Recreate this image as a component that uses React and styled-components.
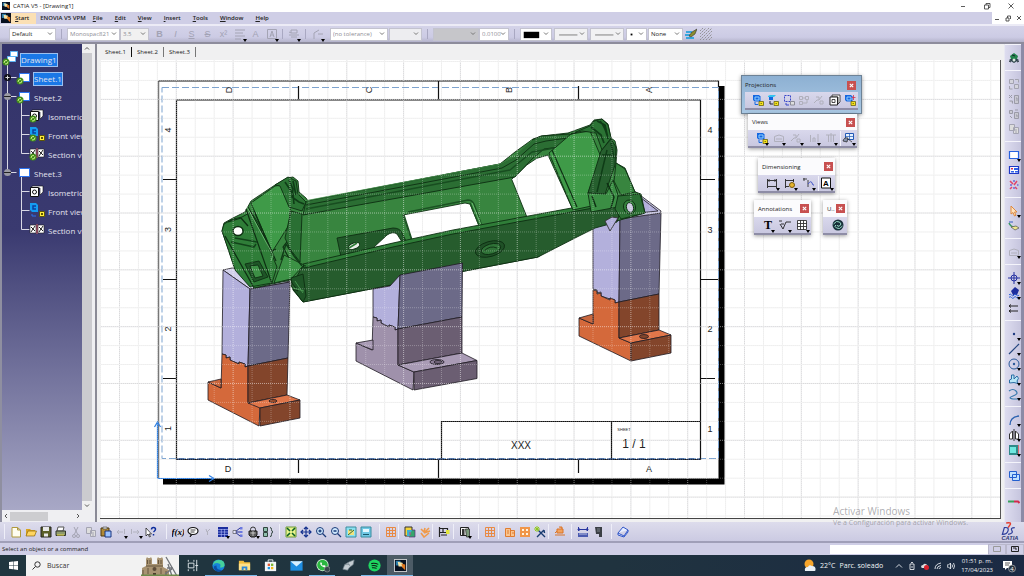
import React from "react";
import styled, { createGlobalStyle } from "styled-components";

const range = (n) => Array.from({ length: n }, (_, i) => i);

/* 12 x 12 glyphs used by every toolbar */
const cube = (
    <>
        <path d="M1 1h6l1.500 1.500v5H2.500L1 6z" fill="#1467e0" />
        <path d="M3 3h4v3H3z" fill="none" stroke="#8fd0ff" />
    </>
);
const yellowBox = <path d="M7 7.500h4.500v4H7zM8.500 9.500h1.500" fill="#f6e21c" stroke="#6b6410" strokeWidth=".8" />;
const sheetBack = <path d="M1.500 1.500h4v4h-4zM6.500 6.500h4v4h-4zM7 1.500h3.500v3M1.500 8v3h3" fill="#d4d4dc" stroke="#a3a3b0" />;

const glyphs = {
    catia: (
        <>
            <path d="M0 0h12v12H0z" fill="#07101f" />
            <path d="M1 1h5v5H1z" fill="#2a7ba8" />
            <path d="M3 2l5 1 2 5-3-1-3 0z" fill="#f3e3a8" />
            <path d="M7 4l4 1v6l-3-3z" fill="#e0781f" />
        </>
    ),
    fresh: <path d="M2 1.500h5.500L10.500 4v7H2zM7.500 1.500V4h3" fill="#fffdf0" stroke="#b09a3c" />,
    open: (
        <>
            <path d="M1 10V3h4l1 1h4v6z" fill="#d9a520" />
            <path d="M1 10l2-5h8.500l-2 5z" fill="#ffd560" stroke="#8a640c" strokeWidth=".7" />
        </>
    ),
    save: (
        <>
            <path d="M1 1h10v10H1z" fill="#5a5f28" stroke="#222" />
            <path d="M3 1h6v4H3zM4 7.500h4v3H4z" fill="#e8e8e8" />
        </>
    ),
    print: (
        <>
            <path d="M3 1h6l-1 4H2z" fill="#fff" stroke="#555" />
            <path d="M1 5h9.500v4.500H1z" fill="#8f9a6c" stroke="#30352a" />
            <path d="M2 9h7" stroke="#e3d649" />
        </>
    ),
    cut: <path d="M4 1l3.500 7M8 1L4.500 8M2.500 10a1.500 1.500 0 1 0 3 0 1.500 1.500 0 1 0-3 0M6.500 10a1.500 1.500 0 1 0 3 0 1.500 1.500 0 1 0-3 0" fill="none" stroke="#a4a4b2" />,
    copy: <path d="M1.500 1.500h5v6h-5zM5.500 4.500h5v6h-5zM7 7h2M7 9h2" fill="#ddd" stroke="#a4a4b2" />,
    paste: (
        <>
            <path d="M1 2h8v8H1z" fill="#b28a35" stroke="#4d3b12" />
            <path d="M3 1h4v2H3z" fill="#d9d9d9" stroke="#444" strokeWidth=".6" />
            <path d="M5 5h6v6H5z" fill="#9cc3ff" stroke="#18357f" />
        </>
    ),
    undo: <path d="M2 6h6M2 6l2-2M2 6l2 2M9.500 3v5" fill="none" stroke="#b1b1be" />,
    redo: <path d="M3 6h6M9 6L7 4M9 6L7 8M1.500 3v5" fill="none" stroke="#b1b1be" />,
    help: (
        <>
            <path d="M1 2v8l2-2 1.500 3 1-.5L4 8h2.500z" fill="#fff" stroke="#111" strokeWidth=".7" />
            <path d="M6.500 3.500q0-2 2-2t2 1.800q0 1.200-2 2.700M8.500 8v1.500" fill="none" stroke="#0c2c9c" strokeWidth="1.500" />
        </>
    ),
    fx: <text x="-.5" y="9" fontFamily="Liberation Serif, serif" fontStyle="italic" fontWeight="bold" fontSize="9">f(x)</text>,
    talk: (
        <>
            <ellipse cx="6" cy="5" rx="5" ry="3.500" fill="#fff" stroke="#111" strokeWidth="1.200" />
            <path d="M4 8l-1 3 3-3M3.500 4h5M3.500 6h4" fill="none" stroke="#111" strokeWidth=".8" />
        </>
    ),
    hook: <path d="M4 3l1 3 3-3M5.500 6v3" fill="none" stroke="#b1b1be" />,
    grid: (
        <>
            <path d="M1 1h10v10H1z" fill="#1b2d9e" />
            <path d="M1 3.500h10M1 6h10M1 8.500h10M4.300 3v8M7.600 3v8" stroke="#b9c3ff" strokeWidth=".6" />
        </>
    ),
    nodes: (
        <>
            <path d="M3 6l5-4M3 6h6M3 6l5 4" stroke="#26309c" fill="none" />
            <path d="M1 4.500h3v3H1z" fill="#e8e8ff" stroke="#444" strokeWidth=".6" />
            <path d="M8 1h2.500v2.500H8zM8 5h2.500v2H8zM8 8.500h2.500V11H8z" fill="#6a78e0" />
        </>
    ),
    lock: (
        <>
            <path d="M3.500 5V3.500a2.500 2.500 0 0 1 5 0V5" fill="none" stroke="#333" />
            <path d="M2 5h8v4l-2 2H4L2 9z" fill="#5a5a5a" stroke="#1c1c1c" />
            <path d="M6 5v5M3.500 7h5" stroke="#d8d8d8" strokeWidth=".8" />
        </>
    ),
    book: (
        <>
            <path d="M1.500 1.500h4v4h-4zM1.500 6.500h4v4h-4z" fill="#8fc0ae" stroke="#31453e" />
            <path d="M8 1.500q1.500 0 1.500 2t1.500 2.500q-1.500 0-1.500 2.500t-1.500 2" fill="none" stroke="#31453e" />
        </>
    ),
    fit: (
        <>
            <path d="M1 1h10v10H1z" fill="#e6f28a" stroke="#6c9a3a" />
            <path d="M2 2l3 3M10 2L7 5M2 10l3-3M10 10L7 7" stroke="#0b5f25" strokeWidth="1.600" />
        </>
    ),
    move: <path d="M6 1v10M1 6h10M4 3l2-2 2 2M4 9l2 2 2-2M3 4L1 6l2 2M9 4l2 2-2 2" fill="none" stroke="#16338f" strokeWidth="1.200" />,
    zoomIn: (
        <>
            <circle cx="5" cy="5" r="3.500" fill="#cfe9ff" stroke="#1a3a78" />
            <path d="M7.500 7.500l3.500 3.500M3.500 5h3M5 3.500v3" stroke="#1a3a78" strokeWidth="1.300" />
        </>
    ),
    zoomOut: (
        <>
            <circle cx="5" cy="5" r="3.500" fill="#cfe9ff" stroke="#1a3a78" />
            <path d="M7.500 7.500l3.500 3.500M3.500 5h3" stroke="#1a3a78" strokeWidth="1.300" />
        </>
    ),
    normal: (
        <>
            <path d="M1 1h10v10H1z" fill="#8be0f0" stroke="#3b8c9e" />
            <path d="M3 4h6v5H3z" fill="#f3e27c" />
            <path d="M3 9l6-5M4 4h3" stroke="#2c6a3a" />
        </>
    ),
    render: (
        <>
            <path d="M1 1h10v10H1z" fill="#70c8e4" stroke="#3b8c9e" />
            <path d="M3 3h6v3H3z" fill="#e4f8ff" />
            <path d="M3 8.500h6" stroke="#1b5a6c" />
        </>
    ),
    orangeGrid: <path d="M1.500 1.500h9v9h-9zM4.500 1v10M7.500 1v10M1 4.500h10M1 7.500h10" fill="none" stroke="#e88a45" />,
    chart: (
        <>
            <path d="M1 1h7v9H1z" fill="#f3d33c" stroke="#333" />
            <path d="M3 4h5v6H3z" fill="#39b0d0" />
            <path d="M8 4h3v7H5" fill="#35a56c" stroke="#5c2b80" strokeWidth=".7" />
            <path d="M6 9V6" stroke="#d23c6c" />
        </>
    ),
    hand: <path d="M2 3l3 3 1-4M6 6l4-4M5 7l6-2M2 7l3 4 5-4" fill="none" stroke="#f09a4a" strokeWidth="1.600" />,
    flag: (
        <>
            <path d="M1.500 1v10M1.500 2.500h8v4h-8M3 9h6M5 2v4" fill="none" stroke="#222" strokeWidth="1.200" />
            <path d="M8 4h3.500v4H8z" fill="#e2e63a" />
        </>
    ),
    photo: (
        <>
            <path d="M1.500 1.500h8v8h-8z" fill="#f4f4f4" stroke="#222" />
            <path d="M3 9V3h2.500v6z" fill="#333" />
            <path d="M6.500 3h4v8h-3z" fill="#7c9a7c" stroke="#222" strokeWidth=".7" />
        </>
    ),
    orangeSheet: <path d="M1.500 2.500h5v8h-5zM6.500 4.500h4v6h-4zM3 5h2M3 7h2M8 7h2" fill="#f9c48f" stroke="#e07c2f" />,
    orangeDots: (
        <>
            <path d="M1 1h10v10H1z" fill="#f0964a" />
            <path d="M3 3h2v2H3zM7 3h2v2H7zM3 7h2v2H3zM7 7h2v2H7z" fill="#fff3df" />
        </>
    ),
    axes: (
        <>
            <path d="M3 11l7-7M4 4l7 7M10 4l.5 3" stroke="#173a6f" strokeWidth="1.400" fill="none" />
            <path d="M3 0v6M0 3h6M1 1l4 4M5 1L1 5" stroke="#8fc81b" />
        </>
    ),
    stamp: <path d="M3 3h6v4H3zM1 9h10M5 1h3v2M1 7l2-2" fill="#f2a15c" stroke="#d97528" />,
    ruler: (
        <>
            <path d="M1 3.500h10M2.500 2L1 3.500 2.500 5M9.500 2L11 3.500 9.500 5M1.500 1v4M10.500 1v4" fill="none" stroke="#2836a0" />
            <path d="M1 7h10v4H1z" fill="#4a5ab0" />
            <path d="M3 7v2M5 7v2M7 7v2M9 7v2" stroke="#fff" strokeWidth=".6" />
        </>
    ),
    pad: (
        <>
            <path d="M3 1h7v10H7V8H4z" fill="#3b3f45" />
            <path d="M5 3h3M5 5h3" stroke="#9aa0a8" strokeWidth=".7" />
        </>
    ),
    eraser: <path d="M1 7l5-6 5 3-4 6zM1 7v2l6 2 4-5V4" fill="#e5ecff" stroke="#3156c8" />,
    dim1: <path d="M1.500 2v9M10.500 2v9M2 3.500h8M3.500 2.500L2 3.500l1.500 1M8.500 2.500l1.500 1-1.500 1M2 9.500h8" fill="none" stroke="#222" strokeWidth=".9" />,
    dim2: (
        <>
            <path d="M1.500 2v9M9.500 2v3M2 3.500h8M2 9.500h3" fill="none" stroke="#222" strokeWidth=".9" />
            <circle cx="8" cy="8" r="2.500" fill="#e7b52c" stroke="#7a5a0a" />
        </>
    ),
    dim3: (
        <>
            <path d="M1 2h4M2 1v3M6 3v7" fill="none" stroke="#333" strokeWidth=".9" />
            <path d="M6 7q3-4 4-1t2 2" fill="none" stroke="#4557c8" />
        </>
    ),
    boxA: (
        <>
            <path d="M1.500 1h9v10h-9z" fill="#fff" stroke="#111" />
            <text x="6" y="9" textAnchor="middle" fontFamily="Liberation Sans, sans-serif" fontWeight="bold" fontSize="8">A</text>
        </>
    ),
    letterT: <text x="6" y="10" textAnchor="middle" fontFamily="Liberation Serif, serif" fontWeight="bold" fontSize="12">T</text>,
    rough: <path d="M1 5l3 5 3-7h5M0 2h3M2 5h3" fill="none" stroke="#222" strokeWidth=".9" />,
    table: <path d="M1.500 1.500h9v9h-9zM4.500 1v10M7.500 1v10M1 4.500h10M1 7.500h10" fill="#fff" stroke="#333" strokeWidth=".9" />,
    swirl: (
        <>
            <circle cx="6" cy="6" r="5.500" fill="#18303a" />
            <path d="M1.500 5q3-4 6-2t0 4q-2 1-2.500-1M10.500 7q-3 4-6 2T4 6" fill="none" stroke="#9adcc8" />
        </>
    ),
    view1: <>{cube}{yellowBox}<path d="M3 8v2.500h3" fill="none" stroke="#1467e0" /></>,
    view2: (
        <>
            <path d="M1 2l2-1h6l-2 2H1z" fill="#35c2ee" />
            <path d="M2 3h4v3H2z" fill="#1467e0" />
            <path d="M3 7v3h3" fill="none" stroke="#223" />
            {yellowBox}
        </>
    ),
    view3: (
        <>
            <path d="M1.500 1.500h6v6h-6z" fill="none" stroke="#3947c9" strokeDasharray="2 1" />
            <path d="M3 9v2h3" fill="none" stroke="#3947c9" />
            <path d="M7.500 7.500h4v3.500h-4z" fill="#ddd" stroke="#8c8c98" />
        </>
    ),
    off: sheetBack,
    offLink: <path d="M1.500 2.500h3v3h-3zM1.500 7.500h3v3h-3zM7.500 2.500h3v3h-3zM4.500 9H9V6M4.500 4h3" fill="none" stroke="#b0b0bc" />,
    offBox: <path d="M1.500 4.500q4.500-3 9 0v5h-9zM3 7h6" fill="none" stroke="#b0b0bc" />,
    offPad: <path d="M1.500 2.500h3v3h-3zM2 8l2 2M6.500 4.500h4v6h-4zM7 2h3M8 7h1v2" fill="#c9c9d2" stroke="#9b9ba8" />,
    offPad2: <path d="M1 2l3 3M4 2L1 5M1.500 8h3v2.500M6.500 2.500h4v8h-4zM8 5h1v3" fill="#c9c9d2" stroke="#9b9ba8" />,
    offSteps: <path d="M1 9l3-3h2l3-4M3 3h3v3M7 7h3v3H7z" fill="none" stroke="#b0b0bc" />,
    offCols: <path d="M2.500 10V3M5 10V6h2v4M10 10V2" fill="none" stroke="#b0b0bc" />,
    offTable: <path d="M1 3h10M3.500 3v7M8.500 3v7M6 1v9" fill="none" stroke="#b0b0bc" />,
    iso: (
        <>
            <path d="M3 1h8v7L9 10V3H3z" fill="#fff" stroke="#222" strokeWidth=".8" />
            <path d="M1 3h7.500v8H1z" fill="#fff" stroke="#222" />
            <path d="M3 5.500h3v3H3z" fill="none" stroke="#222" strokeWidth=".8" />
        </>
    ),
    view4: <>{cube}{yellowBox}<path d="M9.500 1v5M7.500 3.500h4" stroke="#d3314c" strokeWidth=".8" /></>,
    quick: (
        <>
            <path d="M3.500 1.500h8v6h-8z" fill="#e5f2ff" stroke="#2259b5" />
            <path d="M7.500 1.500v6M3.500 4.500h8" stroke="#2259b5" strokeWidth=".7" />
            <path d="M1 9q1-4 5-3l-1 4zM6 7l4 3" fill="#8793ad" stroke="#222" strokeWidth=".7" />
        </>
    ),
    drafter: (
        <>
            <path d="M1 8l5-3 5 3-5 3z" fill="#2a4048" />
            <path d="M2 4l4-3 4 3-1 3H3z" fill="#23824d" />
            <path d="M4 3l3 1M1 9l2 1M9 10l2-1" stroke="#16262c" />
            <circle cx="6" cy="8" r="1.500" fill="#d9e8df" />
        </>
    ),
    page: <path d="M1.500 2.500h9v7h-9z" fill="#fff" stroke="#2661df" strokeWidth="1.200" />,
    pageSplit: (
        <>
            <path d="M1.500 2.500h9v7h-9z" fill="#fff" stroke="#1d37c5" strokeWidth="1.200" />
            <path d="M3 4h2v1.500H3z" fill="#d02c58" />
            <path d="M6 4h4v2H6zM3 7h3v1.500H3zM7 7h3v1.500H7z" fill="#2f63e8" />
        </>
    ),
    scatter: (
        <>
            <path d="M2 2l3 3M9 2L6 6M2 10l2-2M9 10L7 8" fill="none" stroke="#e0436b" strokeWidth="1.500" />
            <path d="M5 2h2M5 9h2M2 6h2M9 6h1.500" stroke="#6a6ad8" strokeWidth="1.500" />
        </>
    ),
    pick: <path d="M3 1v8l2-1.500L6.500 11l1.500-.7L6.500 7H9z" fill="#ffe3bd" stroke="#df8a3f" />,
    chain: (
        <>
            <path d="M1 3q2 5 8 4" fill="none" stroke="#3d9b63" strokeWidth="1.500" />
            <path d="M3 7l4 3 4-2-3-2z" fill="#f0e78b" stroke="#555" strokeWidth=".7" />
            <path d="M1 2h4" stroke="#335bc0" />
        </>
    ),
    target: (
        <>
            <circle cx="6" cy="6" r="3" fill="none" stroke="#2431a2" />
            <path d="M6 0v12M0 6h12" stroke="#2431a2" />
        </>
    ),
    bucket: (
        <>
            <path d="M3 4l4-4 4 3-2 5-4 0z" fill="#1c2c9c" />
            <path d="M1 8q1-2 2.500 0t2.500 0 2.500 0 2.500 0M1 10.500q1-2 2.500 0t2.500 0 2.500 0 2.500 0" fill="none" stroke="#2e61d8" />
        </>
    ),
    arrows: <path d="M1 4h9M3 2.500L1 4l2 1.500M1 9h9M3 7.500L1 9l2 1.500" fill="none" stroke="#222" />,
    dot: <circle cx="6" cy="6" r="1.200" fill="#1c3a80" />,
    line: <path d="M1 11L11 1" stroke="#24457e" strokeWidth="1.200" />,
    circle: (
        <>
            <circle cx="6" cy="6" r="5" fill="none" stroke="#2b5a9a" />
            <circle cx="6" cy="6" r="1.200" fill="#2b5a9a" />
        </>
    ),
    profile: <path d="M1.500 10q-1-4 2-4V2h2.500v4l3-3q3 2 0 5l1 2.500-4-1z" fill="#b8e6f6" stroke="#2b6ea5" />,
    spline: <path d="M1 3q4-3 7 0t-3 5 0 3h5" fill="none" stroke="#3578ad" strokeWidth="1.200" />,
    corner: <path d="M2 11q0-8 9-9" fill="none" stroke="#2c62b0" strokeWidth="1.300" />,
    mirror: <path d="M6 0v12M1.500 5v5h3V2zM10.500 5v5h-3V2z" fill="#fff" stroke="#333" />,
    shade: (
        <>
            <path d="M1 1h9v10H1z" fill="#2f8a8a" />
            <path d="M2 3h6v6H2z" fill="#6fe8e0" />
            <path d="M10.500 1v10" stroke="#d44" strokeWidth=".7" />
        </>
    ),
    windows: <path d="M1.500 1.500h7v6h-7zM4.500 4.500h7v6h-7z" fill="#bfe1ff" stroke="#235fcf" />,
    cable: (
        <>
            <path d="M0 5.500h6" stroke="#38a15c" strokeWidth="2" />
            <path d="M6 5.500h4l1.500 1.500" stroke="#d12a4c" strokeWidth="2" fill="none" />
        </>
    ),
    brush: (
        <>
            <path d="M1 4h6M0 7h6M1 10h8" stroke="#3aa6dd" strokeWidth="2" />
            <path d="M4 8l3-4 5-3-2 5-4 3z" fill="#8b8d2c" stroke="#333" strokeWidth=".6" />
        </>
    ),
    hatch: <path d="M0 3l3-3M0 6l6-6M0 9l9-9M0 12L12 0M3 12l9-9M6 12l6-6M9 12l3-3" stroke="#8d8d8d" strokeWidth=".9" strokeDasharray="2 .8" />,
    lines: <path d="M1 2h10M1 5h8M1 8h10M1 11h6" stroke="#a4a4b4" />,
    frameA: <path d="M1.500 1.500h9v9h-9zM4 9l2-6 2 6M5 7h2" fill="none" stroke="#a4a4b4" />,
    stack: <path d="M3 2h6v3H3zM1 7h10M3 9h6M1 4l2 1" fill="none" stroke="#a4a4b4" />,
    turn: <path d="M2 11V5l5-3M6 6h5" fill="none" stroke="#a4a4b4" />,
};

const Icon = ({ name, size = 12 }) => (
    <svg width={size} height={size} viewBox="0 0 12 12" aria-hidden="true">{glyphs[name]}</svg>
);

const Tool = ({ name, more }) => (
    <ToolButton type="button" aria-label={name}>
        <Icon name={name} />
        {more && <More viewBox="0 0 4 3"><path d="M0 0h4L2 3z" /></More>}
    </ToolButton>
);

const Chevron = () => (
    <Arrow viewBox="0 0 6 4"><path d="M1 .5l2 2 2-2" fill="none" stroke="#777" /></Arrow>
);

const Combo = ({ label, value, w, tone, bg, lead, children }) => (
    <ComboBox $w={w} $bg={bg} $lead={lead}>
        <Field aria-label={label} $tone={tone}><option>{value}</option></Field>
        {children}
        <Chevron />
    </ComboBox>
);

const menus = ["File", "Edit", "View", "Insert", "Tools", "Window", "Help"];

const Header = () => (
    <>
        <TitleBar>
            <Icon name="catia" size={8} />
            <Title>CATIA V5 - [Drawing1]</Title>
            <WindowControls>
                <button type="button" aria-label="Minimize"><svg viewBox="0 0 8 8"><path d="M2 4.500h4" /></svg></button>
                <button type="button" aria-label="Restore"><svg viewBox="0 0 8 8"><path d="M1.500 3h4v4h-4zM3 3V1.500h4v4H5.500" /></svg></button>
                <button type="button" aria-label="Close"><svg viewBox="0 0 8 8"><path d="M1.500 1.500l5 5M6.500 1.500l-5 5" /></svg></button>
            </WindowControls>
        </TitleBar>
        <MenuBar>
            <Icon name="catia" size={10} />
            <StartItem type="button"><u>S</u>tart</StartItem>
            <MenuItem type="button">ENOVIA V5 VPM</MenuItem>
            <Menus>
                {menus.map((m) => <MenuItem type="button" key={m}><u>{m[0]}</u>{m.slice(1)}</MenuItem>)}
            </Menus>
            <DocControls>
                <button type="button" aria-label="Minimize document"><svg viewBox="0 0 8 8"><path d="M2 5.500h4" /></svg></button>
                <button type="button" aria-label="Restore document"><svg viewBox="0 0 8 8"><path d="M2 4h3v3H2zM3.500 4V2h3v3" /></svg></button>
                <button type="button" aria-label="Close document"><svg viewBox="0 0 8 8"><path d="M2 2l4 4M6 2L2 6" /></svg></button>
            </DocControls>
        </MenuBar>
        <FormatBar>
            <Combo label="Style" value="Default" w={47} lead={9} />
            <Grip $gap={5} />
            <Combo label="Font" value="Monospac821" w={53} tone="#8e8e96" />
            <Combo label="Font size" value="3.5" w={29} tone="#8e8e96" bg="#f1f1f1" />
            <Letters>
                <LetterButton type="button"><b>B</b></LetterButton>
                <LetterButton type="button"><i>I</i></LetterButton>
                <LetterButton type="button"><u>S</u></LetterButton>
                <LetterButton type="button"><s>S</s></LetterButton>
                <LetterButton type="button">x²</LetterButton>
                <Tool name="lines" more />
                <LetterButton type="button">A</LetterButton>
                <Tool name="frameA" more />
            </Letters>
            <Grip $gap={3} />
            <ToolSlot><Tool name="stack" more /></ToolSlot>
            <Grip $gap={4} />
            <ToolSlot><Tool name="turn" more /></ToolSlot>
            <Combo label="Tolerance" value="(no tolerance)" w={58} tone="#8e8e96" lead={5} />
            <Combo label="Tolerance value" value="" w={33} bg="#ededf0" lead={1} />
            <Grip $gap={5} />
            <Combo label="Unit" value="" w={46} bg="#c6c6ca" />
            <Combo label="Precision" value="0.0100" w={30} tone="#8e8e96" />
            <Grip $gap={5} />
            <Combo label="Colour" value="" w={32}><Sample viewBox="0 0 33 12"><path d="M3 3h17v7H3z" /></Sample></Combo>
            <Combo label="Line width" value="" w={34} bg="#f1f1f3" lead={2}><Sample viewBox="0 0 34 12"><path d="M4 6h20v1H4z" fill="#777" /></Sample></Combo>
            <Combo label="Line type" value="" w={34} bg="#f1f1f3" lead={2}><Sample viewBox="0 0 34 12"><path d="M4 6h20v1H4z" fill="#777" /></Sample></Combo>
            <Combo label="Point" value="" w={21} lead={2}><Sample viewBox="0 0 21 12"><path d="M4 5h2v2H4z" /></Sample></Combo>
            <Combo label="Layer" value="None" w={35} lead={1} />
            <ToolSlot><Tool name="brush" /><Tool name="hatch" /></ToolSlot>
        </FormatBar>
    </>
);

const treeRows = [
    { kind: "root", text: "Drawing1", on: true, badge: true },
    { kind: "sheet", text: "Sheet.1", on: true, mark: "+", badge: true },
    { kind: "sheet", text: "Sheet.2", mark: "-", badge: true, kids: true },
    { kind: "iso", text: "Isometric view", badge: true },
    { kind: "front", text: "Front view", badge: true },
    { kind: "section", text: "Section view", badge: true, last: true },
    { kind: "sheet", text: "Sheet.3", mark: "-", kids: true, end: true },
    { kind: "iso", text: "Isometric view", tail: true },
    { kind: "front", text: "Front view", tail: true },
    { kind: "section", text: "Section view", tail: true, last: true },
];

const treeIcons = {
    root: <path d="M8.500 1.500h7v5h-7zM5.500 6.500h8v5h-8z" fill="#fff" stroke="#5fb4f5" />,
    sheet: <path d="M17.500 4.500h10v8h-10z" fill="#fff" stroke="#2b73f0" />,
    iso: (
        <>
            <path d="M30 3h11v6l-3 3V5h-8z" fill="#fff" stroke="#111" strokeWidth=".6" />
            <path d="M28.500 4.500h8v9h-8z" fill="#fff" stroke="#111" />
            <circle cx="32.500" cy="9" r="2" fill="none" stroke="#111" />
        </>
    ),
    front: (
        <>
            <path d="M28 1h6l2 2v7h-6l-2-2z" fill="#159cf2" />
            <path d="M34 4h-3v3h3" fill="none" stroke="#0b3fa0" strokeWidth="1.500" />
            <path d="M30 12v2h4" fill="none" stroke="#2b73f0" />
            <path d="M37.500 9.500h5v5h-5z" fill="#ffeb3b" stroke="#5c5508" />
            <path d="M39 11h2v2h-2z" fill="#5c5508" />
        </>
    ),
    section: (
        <>
            <path d="M28 4h6v8h-6zM36 4h6v8h-6z" fill="#fff" stroke="#222" strokeWidth=".6" />
            <path d="M29 11l4-6M37 11l4-6M29 6l4 4M37 6l4 4" stroke="#222" />
            <path d="M35 3v10" stroke="#d35a5a" />
        </>
    ),
};

const badgeAt = { root: 0, sheet: 14, iso: 27, front: 27, section: 27 };

const Branch = ({ row }) => {
    const child = ["iso", "front", "section"].includes(row.kind);
    const width = row.kind === "root" ? 18 : child ? 45 : 31;
    return (
        <svg width={width} height="19" viewBox={`0 0 ${width} 19`} aria-hidden="true">
            <g stroke="#d8d8e4" fill="none">
                {row.kind === "root" && <path d="M5.500 12v7" />}
                {row.kind === "sheet" && <path d={row.end ? "M5.500 0v8.500h9" : "M5.500 0v19M5.500 8.500h9"} />}
                {row.kids && <path d="M19.500 12v7" />}
                {child && !row.tail && <path d="M5.500 0v19" />}
                {child && <path d={row.last ? "M19.500 0v8.500h8" : "M19.500 0v19M19.500 8.500h8"} />}
            </g>
            {row.mark && (
                <>
                    <circle cx="5.500" cy="8.500" r="3.500" fill={row.mark === "+" ? "#11111a" : "#9a9aa4"} />
                    <path d={row.mark === "+" ? "M3.500 8.500h4M5.500 6.500v4" : "M2 8.500h7"} stroke={row.mark === "+" ? "#ddd" : "#222"} />
                </>
            )}
            {treeIcons[row.kind]}
            {row.badge && (
                <g transform={`translate(${badgeAt[row.kind]} 8)`}>
                    <circle cx="4" cy="4" r="3.500" fill="#3f8a1a" />
                    <path d="M2 5q0-3 3-2.500M6 3.500q0 3-3 2.500" stroke="#cdf08a" fill="none" />
                </g>
            )}
        </svg>
    );
};

const Tree = () => (
    <Sidebar>
        <TreeMain>
            <TreeView>
                {treeRows.map((row, i) => (
                    <TreeRow key={i}>
                        <Branch row={row} />
                        <TreeLabel $on={row.on}>{row.text}</TreeLabel>
                    </TreeRow>
                ))}
            </TreeView>
            <ScrollY>
                <svg viewBox="0 0 8 8"><path d="M2 5l2-2 2 2" /></svg>
                <ThumbY />
                <svg viewBox="0 0 8 8"><path d="M2 3l2 2 2-2" /></svg>
            </ScrollY>
        </TreeMain>
        <ScrollX>
            <svg viewBox="0 0 8 8"><path d="M5 2L3 4l2 2" /></svg>
            <ThumbX />
            <svg viewBox="0 0 8 8"><path d="M3 2l2 2-2 2" /></svg>
        </ScrollX>
    </Sidebar>
);

/* Sheet coordinates share one origin with the grid */
const STEP = 18.94;
const gridX = range(48).map((i) => ({ at: 119.5 + (i - 1) * STEP, strong: i % 3 === 1 }));
const gridY = range(25).map((i) => ({ at: 61.5 + i * STEP, strong: i % 3 === 2 }));

const GridLines = ({ color, strongColor, dash }) => (
    <g fill="none" strokeDasharray={dash}>
        {gridX.map((l) => <path key={`x${l.at}`} d={`M${l.at} 60V519`} stroke={l.strong ? strongColor : color} />)}
        {gridY.map((l) => <path key={`y${l.at}`} d={`M100 ${l.at}H1002`} stroke={l.strong ? strongColor : color} />)}
    </g>
);

const Frame = () => (
    <g fill="none" stroke="#111">
        <path d="M718.500 86h6v398.500H163V478.500h555.500z" fill="#000" stroke="none" />
        <path d="M158.500 478V81" stroke="#777" strokeWidth="1.500" />
        <path d="M158.500 81h560v6" strokeWidth="1.200" />
        <path d="M162 87.500h556.500v371H162z" stroke="#7da3cf" strokeDasharray="7 3" />
        <path d="M176.500 100h524v359.500h-524z" strokeWidth="1.200" />
        <path d="M163 179.500h13M163 279.500h13M163 378.500h13M701 179.500h14M701 279.500h17M701 378.500h14" strokeWidth="1.200" />
        <path d="M298.500 86v14M438.500 81v19M578.500 86v14M298.500 460v13M438.500 460v18M578.500 460v13" strokeWidth="1.200" />
        <path d="M441.500 459V421.500H700M611.500 421.500V459" strokeWidth="1.200" />
        <path d="M177 459h523" stroke="#183a78" strokeDasharray="7 3" />
        <path d="M157.500 478V422M154.500 427l3-5 3 5M157.500 478.500H214M209 475.500l5 3-5 3" stroke="#2f7fe0" strokeWidth="1.200" />
    </g>
);

const Marks = () => (
    <g fontFamily="Liberation Sans, sans-serif" fontSize="9" fill="#222" textAnchor="middle">
        {["4", "3", "2", "1"].map((n, i) => (
            <g key={n}>
                <text x={710} y={133 + i * 99.500}>{n}</text>
                <text transform={`translate(171 ${130 + i * 99.500}) rotate(-90)`}>{n}</text>
            </g>
        ))}
        {["D", "C", "B", "A"].map((n, i) => (
            <text key={n} transform={`translate(${232 + i * 140} 90) rotate(-90)`}>{n}</text>
        ))}
        <text x="228" y="472">D</text>
        <text x="649" y="472">A</text>
        <text x="521" y="449" fontSize="10">XXX</text>
        <text x="634" y="448" fontSize="12">1 / 1</text>
        <text x="624" y="431" fontSize="4">SHEET</text>
    </g>
);

const SidePillars = () => (
    <g stroke="#1e1a22" strokeWidth=".8" strokeLinejoin="round">
        {/* left */}
        <path d="M223 270l9-2 58 14-40 7z" fill="#d2d0ea" />
        <path d="M223 270l27 19-2 77-3 1v-3l-6-2v2l-9-4v-3l-4 1v-3l-4-1z" fill="#b3b0dc" />
        <path d="M250 289l40-7-2 76-40 8z" fill="#6c6a88" />
        <path d="M222 354l4 1v3l4-1v3l9 4v-2l6 2v3l3-1v36l12 5-1 19-51-26v-18l13 6z" fill="#d4693b" />
        <path d="M208 382l13-3v9z" fill="#c9673e" />
        <path d="M248 366l40-8-1 37-39 8z" fill="#83452b" />
        <path d="M248 403l39-8 13 5-40 8z" fill="#e0764a" />
        <path d="M260 408l40-8v18l-40 8z" fill="#83452b" />
        <ellipse cx="273" cy="401" rx="4" ry="1.500" fill="#a04d28" />
        {/* right */}
        <path d="M620 194l16-2 25 19-1 4-42 6z" fill="#c4c2e0" />
        <path d="M636 194l22 17-20 2z" fill="#b3b0dc" />
        <path d="M593 220h27l-1 82-4 1v-3l-5-2v1l-9-3v-4l-4 1v-3l-4-1z" fill="#b3b0dc" />
        <path d="M620 219l41-6-2 81-40 8z" fill="#6c6a88" />
        <path d="M593 290l4 1v3l4-1v3l9 4v-2l5 2v3l4-1v36l12 5v18l-52-25v-18l14 6z" fill="#d4693b" />
        <path d="M579 318l14-4v10z" fill="#c9673e" />
        <path d="M619 302l40-8v36l-40 8z" fill="#83452b" />
        <path d="M619 338l40-8 12 5-40 8z" fill="#e0764a" />
        <path d="M631 343l40-8v18l-40 8z" fill="#83452b" />
        <ellipse cx="644" cy="336.500" rx="4.500" ry="2" fill="#83452b" />
    </g>
);

/* stands in front of the casting */
const CenterPillar = () => (
    <g stroke="#1e1a22" strokeWidth=".8" strokeLinejoin="round">
        <path d="M373 289l17-3 10-11-2 54-3 1v-3l-6-2v2l-8-4v-3l-4 1v-3l-4-1z" fill="#b3b0dc" />
        <path d="M400 275l62.500-12-.5 54-64 12z" fill="#6c6a88" />
        <path d="M373 317l4 1v3l4-1v3l8 4v-2l6 2v3l3-1v36l16 7-1 18-57-29v-18l16 7z" fill="#9f91ab" />
        <path d="M356 343l17-3v10z" fill="#a99bb5" />
        <path d="M398 329l64-12v36l-64 12z" fill="#6b5e72" />
        <path d="M398 365l64-12 15 7.500-63 11.500z" fill="#a99bb5" />
        <path d="M414 372l63-11.500v18L414 390z" fill="#6b5e72" />
        <ellipse cx="437" cy="362" rx="7" ry="2.500" fill="#8d7f98" />
        <ellipse cx="438" cy="362" rx="4" ry="1.500" fill="#77697f" />
    </g>
);

const Casting = () => (
    <g stroke="#0d2f12" strokeWidth=".9" strokeLinejoin="round">
        <path fillRule="evenodd" fill="#38853f" d="M222 231L224 223 233 218 245 212 251 201 275 185 287 178 293 177 298 181 299 192 306 198 308 201 500 164 515 152 533 139 542 136 568 133 590 125 594 120 602 119 608 124 611 138 615 141 617 150 616 163 625 168 635 192 641 194 645 213 613 222 585 229 570 235 538 257 303 302 293 290 291 280 272 284 254 288 235 268z
            M403 215L465 203 470 204 480 228 412 241zM511.700 179.300L526.700 165 536.700 158.300 548 155 573 210 527.700 219z" />
        {/* rear wall */}
        <path d="M306 201l194-37 14-7 18-17 9-4 28-2 6 2-9 10-22 3-12 10-17 18-212 38z" fill="#2b6e33" />
        <path d="M306 205l196-37 14-8 18-16 12-3 22-3" fill="none" />
        <path d="M306 209l204-39 22-18 34-6" fill="none" stroke="#184d20" strokeWidth="1.500" />
        <path d="M304 201l196-37 14-7 18-17" fill="none" stroke="#53a85a" strokeWidth=".7" />
        {/* rim of the openings */}
        <path d="M404 215l8 25M408 212l60-12q4 0 6 4l8 22M470 203l10 25" fill="none" stroke="#1b5223" strokeWidth="1.400" />
        <path d="M472 203l10 24" fill="none" stroke="#6fbf74" />
        {/* recess */}
        <path d="M337 238l56-10q7 0 9 5l5 10-66 14z" fill="#22592a" />
        <path d="M373 248l14-13q6-4 10-1l5 8z" fill="#fff" />
        <ellipse cx="354" cy="246" rx="6" ry="3" transform="rotate(-22 354 246)" fill="#e9efe9" />
        <path d="M349 248l8-5" stroke="#2c7a35" strokeWidth="1.500" />
        {/* front wall */}
        <path d="M303 266l89-20 60-14 168-31 1 8-4 13-22 6-18 9-39 20-235 45-12-16z" fill="#265c2d" />
        <path d="M303 264l90-21 60-13 167-31v4l-167 31-60 13-89 21z" fill="#2f7d38" />
        <ellipse cx="490" cy="249" rx="15" ry="7.500" transform="rotate(-16 490 249)" fill="#1f5026" />
        <ellipse cx="491" cy="249" rx="10" ry="5" transform="rotate(-16 491 249)" fill="#2f7237" />
        <path d="M484 251q6-6 13-3" fill="none" />
        {/* left bracket */}
        <path d="M222 231l2-7 9-5 9-2 9-5 8 12 18 43-5 16-22 4-15-17z" fill="#2f7d38" />
        <path d="M251 203l24-17 7-1 9 14-2 26-17 27z" fill="#3f9a48" />
        <path d="M275 185l13-8 8 4 2 13 8 8-4 9-13-4-9-21z" fill="#2b7334" />
        <path d="M289 180l4 9-1 8 7 5 5 2M293 181l3 14M285 182l8 12 1 10" fill="none" stroke="#0f3c17" strokeWidth="1.600" />
        <path d="M248 207l24 44 4-2M246 209l26 75M254 211l22 50M292 211l-3 28-6 8 9 17 14 2" fill="none" strokeWidth="1.200" />
        <path d="M247 207l26 48-2 6" fill="none" stroke="#79c67e" strokeWidth=".8" />
        <path d="M291 211l11 3-2 48-10-13-5-11z" fill="#2a6f33" />
        <path d="M274 283l10-28 20 10-13 14z" fill="#3c9245" />
        <path d="M281 260l5-16 8 12 8 10" fill="none" stroke="#0f3c17" strokeWidth="1.500" />
        <path d="M231 242l23 5 2-3M235 238l22 4" fill="none" stroke="#12431a" strokeWidth="1.500" />
        <path d="M245 264l14-3 9 16-14 5z" fill="#1f5527" />
        <path d="M250 266l8-1 5 11-8 2z" fill="#3d8f45" />
        <path d="M225 236l28 50M228 222l13-4 7 8" fill="none" strokeWidth="1.300" />
        <ellipse cx="238" cy="231" rx="5" ry="4.500" fill="#fff" strokeWidth="1.600" />
        <path d="M291 278l12-4 3 22-3 6-10-13 5 2-6-8z" fill="#1f5527" />
        <path d="M295 281l8 12M293 288l11 3" stroke="#4c9c54" />
        {/* right bracket */}
        <path d="M549 153l22-19 19-3 11 26-13 36 8 12-23 5z" fill="#3f9a48" />
        <path d="M552 150l25 57" fill="none" strokeWidth="1.200" />
        <path d="M571 134l19-8 4-5 8-2 6 6 3 13-9 12-6-17-14-2z" fill="#2b7334" />
        <path d="M597 121l8 4 3 14M591 127l10 8 3 8M600 121q5 6 7 14" fill="none" stroke="#0f3c17" strokeWidth="1.800" />
        <path d="M601 151l10-12 5 8-1 18-10 29-17-1z" fill="#265f2e" />
        <path d="M607 150l-10 42M602 155l10 0M611 143l3 15" fill="none" stroke="#0f3c17" strokeWidth="1.500" />
        <path d="M588 193l18 1 7-14 5 15v12l-27 5z" fill="#3b8e44" />
        <path d="M607 183l7 14-3 11M592 196l4 11" fill="none" strokeWidth="1.400" />
        <path d="M616 163l9 6 10 23-14 3-7-14z" fill="#38853f" />
        <path d="M618 196l22-2 5 19-24 6-6-10z" fill="#2b6e33" />
        <ellipse cx="629.500" cy="207" rx="6" ry="7" transform="rotate(-15 629.500 207)" fill="#35803d" />
        <ellipse cx="630" cy="207.500" rx="3.500" ry="5" transform="rotate(-15 630 207.500)" fill="#c9c7df" />
        <path d="M605 221l7-4 6 1-8 13z" fill="#b3b0dc" stroke="#333" />
    </g>
);

const Sheet = () => (
    <Drawing viewBox="100 60 900 458" preserveAspectRatio="xMinYMin slice" role="img" aria-label="Isometric drawing">
        <GridLines color="#eeeeee" strongColor="#dadadc" />
        <Frame />
        <Marks />
        <SidePillars />
        <Casting />
        <CenterPillar />
        <GridLines color="rgba(255,255,255,.28)" strongColor="rgba(255,255,255,.5)" dash="1 1" />
    </Drawing>
);

const palettes = [
    { title: "Projections", x: 641, y: 15, w: 121, h: 39, active: true, tools: ["view1", "view2", "view3", "offLink", "offSteps", "iso", "view4"] },
    { title: "Views", x: 648, y: 54, w: 109, h: 34, more: true, split: true, tools: ["view1", "offBox", "offSteps", "offCols", "offTable", "quick"] },
    { title: "Dimensioning", x: 658, y: 98, w: 77, h: 35, more: true, split: true, tools: ["dim1", "dim2", "dim3", "boxA"] },
    { title: "Annotations", x: 654, y: 140, w: 57, h: 35, more: true, tools: ["letterT", "rough", "table"] },
    { title: "U..", x: 723, y: 140, w: 24, h: 35, tools: ["swirl"] },
];

const Palettes = () => palettes.map((p) => (
    <Palette key={p.title} $x={p.x} $y={p.y} $w={p.w} $h={p.h} $active={p.active}>
        <PaletteHead $active={p.active}>
            <span>{p.title}</span>
            <CloseButton type="button" aria-label={`Close ${p.title}`}><svg viewBox="0 0 8 8"><path d="M2.500 2.500l3 3M5.500 2.500l-3 3" /></svg></CloseButton>
        </PaletteHead>
        <PaletteTools $split={p.split}>
            {p.tools.map((t) => <Tool key={t} name={t} more={p.more} />)}
        </PaletteTools>
    </Palette>
));

const sideGroups = [
    ["drafter"],
    ["off", "offPad2", "offPad", "copy"],
    ["page*", "pageSplit", "scatter"],
    ["pick*", "chain"],
    ["offBox*"],
    ["target*", "bucket*", "arrows"],
    ["dot*", "line*", "circle*", "profile*", "spline*"],
    ["corner*", "mirror*", "shade*"],
    ["windows"],
    ["cable"],
];

const bottomGroups = [
    { lead: 4, tools: ["fresh", "open", "save", "print", "cut", "copy", "paste", "undo*", "redo*", "help"] },
    { lead: 8, tools: ["fx", "talk", "hook", "grid*", "nodes", "lock*", "book"] },
    { lead: 4, tools: ["fit", "move", "zoomIn", "zoomOut", "normal", "render"] },
    { lead: 6, tools: ["orangeGrid"] },
    { tools: ["chart", "hand"] },
    { tools: ["flag"] },
    { lead: 2, tools: ["photo*"] },
    { lead: 6, tools: ["orangeGrid"] },
    { lead: 1, tools: ["orangeSheet", "orangeDots", "axes"] },
    { lead: 1, tools: ["stamp"] },
    { lead: 4, tools: ["ruler", "pad"] },
    { lead: 6, tools: ["eraser"] },
];

const renderTools = (tools) => tools.map((t) => <Tool key={t} name={t.replace("*", "")} more={t.endsWith("*")} />);

const taskIcons = {
    "Task view": <path d="M3.500 5.500h6v5h-6zM3.500 2v2M9.500 2v2M3.500 12v2M9.500 12v2M12.500 2v12M11 8h3" fill="none" stroke="#dfe6ea" />,
    Edge: (
        <>
            <circle cx="8" cy="8" r="6.500" fill="#1784d8" />
            <path d="M2 8q0-6 6.500-6T14.500 8q-1 3-5 2 2-4-2-4.500T2 8z" fill="#45d19b" />
            <path d="M6 8q-1 5 6 5-5 3.500-8-.5T6 8z" fill="#0c4fa5" />
        </>
    ),
    Explorer: (
        <>
            <path d="M2 3h5l1 1.500h6V13H2z" fill="#f5bd3d" />
            <path d="M2 6h12v7H2z" fill="#ffe08a" />
            <path d="M5 9h6v4H9v-2H7v2H5z" fill="#2f86d6" />
        </>
    ),
    Store: (
        <>
            <path d="M2 4h12v10H2z" fill="#f2f6f8" />
            <path d="M5.500 4V2h5v2" fill="none" stroke="#f2f6f8" />
            <path d="M5 6h2.500v2.500H5z" fill="#e4572e" />
            <path d="M8.500 6H11v2.500H8.500z" fill="#7bb832" />
            <path d="M5 9.500h2.500V12H5z" fill="#2196e3" />
            <path d="M8.500 9.500H11V12H8.500z" fill="#f6b71c" />
        </>
    ),
    Mail: (
        <>
            <path d="M1.500 3.500h13v10h-13z" fill="#1e8de0" />
            <path d="M1.500 3.500h13L8 9z" fill="#d8f0ff" />
        </>
    ),
    WhatsApp: (
        <>
            <circle cx="8" cy="7.500" r="6.500" fill="#e9f7ea" />
            <circle cx="8" cy="7.500" r="5.700" fill="#2bb741" />
            <path d="M5.500 5q0 4 5 5l1-1.500-2-1-1 .7L7 7l.6-1-1-1.500z" fill="#fff" />
            <circle cx="13" cy="12" r="3" fill="#3a464d" stroke="#aaa" strokeWidth=".6" />
        </>
    ),
    Rocket: <path d="M2 12l2-5 5-3 5-2-1 5-4 3-2 3zM4 7h5M7 5l3 4" fill="#c3ccd2" stroke="#71808a" strokeWidth=".7" />,
    Spotify: (
        <>
            <circle cx="8" cy="8" r="6.500" fill="#1ed760" />
            <path d="M4.500 6q4-1 7.500.8M5 8.300q3-.8 6 .7M5.300 10.500q3-.6 5 .6" fill="none" stroke="#0c1f14" strokeWidth="1.100" />
        </>
    ),
    CATIA: <g transform="translate(2 2)"><path d="M-.8-.8h13.600v13.600H-.8z" fill="#eee" />{glyphs.catia}</g>,
};

const running = ["Edge", "Explorer", "WhatsApp", "Spotify", "CATIA"];

const Taskbar = () => (
    <Bar>
        <StartButton type="button" aria-label="Start">
            <svg width="9" height="9" viewBox="0 0 9 9"><path d="M0 1l4-.5V4H0zM4.500.4L9 0v4H4.500zM0 4.500h4v3.700L0 7.700zM4.500 4.500H9V9l-4.500-.7z" fill="#fff" /></svg>
        </StartButton>
        <Search>
            <svg width="9" height="9" viewBox="0 0 9 9"><circle cx="5.500" cy="3.500" r="2.700" fill="none" stroke="#333" /><path d="M3.500 5.500L.5 8.500" stroke="#333" /></svg>
            <SearchInput aria-label="Buscar" placeholder="Buscar" />
            <svg width="38" height="20" viewBox="0 0 38 20" aria-hidden="true">
                <path d="M1 20v-8l4-2V3l1-2 1 1 2 0 1-1 1 2v5h5V3l1-2 1 1 2 0 1-1 1 2v8l6 3v6z" fill="#a89372" />
                <path d="M6.500 4v4M9 4v4M17.500 4v4M20 4v4M5 10h17M7 12v6M20 12v6M2 14v5M25 15v4" stroke="#67563f" />
                <circle cx="13.500" cy="13" r="2" fill="#5c4c3a" />
                <path d="M12 20v-3h3v3z" fill="#4b3c2c" />
                <path d="M25 1l11 19M27 8l4 12M26 12h6M31 13l-7 5" stroke="#6f7378" strokeWidth="1.300" fill="none" />
                <path d="M0 18.500h38V20H0z" fill="#6d8a4a" />
            </svg>
        </Search>
        {Object.entries(taskIcons).map(([name, art]) => (
            <TaskButton type="button" key={name} aria-label={name} $on={name === "CATIA"} $running={running.includes(name)}>
                <svg width="15" height="15" viewBox="0 0 16 16">{art}</svg>
            </TaskButton>
        ))}
        <Tray>
            <svg width="14" height="14" viewBox="0 0 14 14"><circle cx="6" cy="5" r="4.500" fill="#f7a62b" /><path d="M2 12q-1-4 3-4 1-3 4-1 4 0 3.500 4 0 1-1 1z" fill="#eaf1f7" /></svg>
            <Weather><span>22°C</span><span>Parc. soleado</span></Weather>
            <TrayIcons>
                <svg viewBox="0 0 8 8"><path d="M1 5.500l3-3 3 3" /></svg>
                <svg viewBox="0 0 8 8"><path d="M2 2h4v5.500H2zM3 .5h2M4 4v2" /></svg>
                <svg viewBox="0 0 8 8"><path d="M0 5q0-2 2-2 2-3 5 1v2H1z" fill="#ddd" stroke="none" /><circle cx="5.500" cy="5.500" r="2.500" fill="#d8202c" stroke="none" /></svg>
                <svg viewBox="0 0 8 8"><path d="M1 7q0-5 6-6M3 7q0-3 4-3.500M5 7q0-1 2-1.500" /></svg>
                <svg viewBox="0 0 8 8"><path d="M0 3h1.500L3.500 1v6l-2-2H0zM5 2.500q1 1.500 0 3M6.500 1q2 3 0 6" /></svg>
            </TrayIcons>
            <Clock><span>01:51 p. m.</span><span>17/04/2023</span></Clock>
            <svg width="14" height="14" viewBox="0 0 14 14"><path d="M1 2h9v7H5l-2 2V9H1z" fill="#fff" /><path d="M3 4h5M3 6h4" stroke="#333" strokeWidth=".8" /><circle cx="10" cy="9.500" r="3.500" fill="#26323f" stroke="#ccc" strokeWidth=".6" /><text x="10" y="12" fontSize="6" textAnchor="middle" fill="#fff">4</text></svg>
        </Tray>
    </Bar>
);

const App = () => (
    <Shell>
        <GlobalStyle />
        <Header />
        <Middle>
            <Tree />
            <Workspace>
                <Tabs>
                    {["Sheet.1", "Sheet.2", "Sheet.3"].map((t, i) => <Tab type="button" key={t} $on={i === 0}>{t}</Tab>)}
                </Tabs>
                <Stage>
                    <Sheet />
                    <Palettes />
                </Stage>
            </Workspace>
            <SideTools>
                {sideGroups.map((g, i) => <SideGroup key={i}>{renderTools(g)}</SideGroup>)}
            </SideTools>
        </Middle>
        <BottomTools>
            {bottomGroups.map((g, i) => <BottomGroup key={i} $lead={g.lead}>{renderTools(g.tools)}</BottomGroup>)}
            <Logo viewBox="0 0 22 20">
                <path d="M7 1q6-1 4 2L9 6" fill="none" stroke="#e33b2e" strokeWidth="1.500" />
                <path d="M5 6q5-1 4 3t-6 4zM16 6q-5 0-3 3t-4 4" fill="none" stroke="#2e3f9c" strokeWidth="1.300" />
                <text x="11" y="19" textAnchor="middle" fontFamily="Liberation Sans, sans-serif" fontStyle="italic" fontWeight="bold" fontSize="6" fill="#2b3572">CATIA</text>
            </Logo>
        </BottomTools>
        <StatusBar>
            <span>Select an object or a command</span>
            <Command aria-label="Command" />
            <StatusButton type="button" aria-label="History"><svg viewBox="0 0 10 8"><path d="M1.500 1.500h7v5h-7z" stroke="#999" /></svg></StatusButton>
            <StatusButton type="button" aria-label="Settings"><svg viewBox="0 0 10 8"><path d="M1.500 1.500h7v5h-7zM3 3h3v2" stroke="#222" /></svg></StatusButton>
        </StatusBar>
        <Taskbar />
        <Watermark>
            <strong>Activar Windows</strong>
            <span>Ve a Configuración para activar Windows.</span>
        </Watermark>
    </Shell>
);

const GlobalStyle = createGlobalStyle`
    * {
        box-sizing: border-box;
    }

    html, body, #root {
        height: 100%;
        margin: 0;
    }

    body {
        font-family: "Open Sans", "Noto Sans", sans-serif;
        font-size: 6px;
        color: #222;
    }

    button, input, select {
        font: inherit;
        color: inherit;
        border: none;
        padding: 0;
        margin: 0;
        background: none;
    }

    svg {
        display: block;
        flex: none;
    }
`;

const Shell = styled.div`
    position: relative;
    display: flex;
    flex-direction: column;
    height: 100vh;
    overflow: hidden;
    background: #cfcee6;
`;

const TitleBar = styled.header`
    display: flex;
    align-items: center;
    gap: 3px;
    flex: 0 0 12px;
    padding-left: 2px;
    background: #fff;
`;

const Title = styled.h1`
    margin: 0;
    font-size: 6px;
    font-weight: 400;
    white-space: nowrap;
`;

const WindowControls = styled.div`
    display: flex;
    gap: 16px;
    margin-left: auto;
    padding-right: 9px;

    svg {
        width: 8px;
        height: 8px;
        fill: none;
        stroke: #333;
        stroke-width: 0.8;
    }
`;

const MenuBar = styled.nav`
    display: flex;
    align-items: center;
    flex: 0 0 12px;
    padding-left: 1px;
`;

const MenuItem = styled.button`
    line-height: 11px;
    font-size: 6px;
    font-weight: 600;
    white-space: nowrap;

    u {
        text-decoration-thickness: 1px;
    }
`;

const StartItem = styled(MenuItem)`
    margin-right: 4px;
    padding: 0 7px 0 4px;
    background: #fbe0b4;
`;

const Menus = styled.div`
    display: flex;
    gap: 12px;
    padding-left: 7px;
`;

const DocControls = styled.div`
    display: flex;
    gap: 3px;
    margin-left: auto;
    padding: 2px 1px;
    background: #fff;

    svg {
        width: 8px;
        height: 8px;
        fill: none;
        stroke: #444;
        stroke-width: 0.9;
    }
`;

const FormatBar = styled.div`
    display: flex;
    align-items: center;
    flex: 0 0 20px;
    border-top: 2px solid #ecebf6;
    border-bottom: 2px solid #8d8c9c;
    background: linear-gradient(#d4d3e9, #cccbe4 70%, #b4b3cb);
`;

const ComboBox = styled.div`
    display: grid;
    flex: none;
    width: ${(p) => p.$w}px;
    height: 13px;
    margin-left: ${(p) => p.$lead || 0}px;
    border: 1px solid #c3c3cf;
    background: ${(p) => p.$bg || "#fff"};

    > * {
        grid-area: 1 / 1;
    }
`;

const Field = styled.select`
    appearance: none;
    width: 100%;
    height: 11px;
    padding-left: 2px;
    font-size: 6px;
    line-height: 11px;
    color: ${(p) => p.$tone || "#222"};
`;

const Arrow = styled.svg`
    width: 6px;
    height: 4px;
    place-self: center end;
    margin-right: 2px;
    pointer-events: none;
`;

const Sample = styled.svg`
    width: 100%;
    height: 11px;
    pointer-events: none;
`;

const Grip = styled.i`
    flex: none;
    width: 1px;
    height: 10px;
    margin: 0 ${(p) => p.$gap}px;
    background: #a9a8c2;
`;

const Letters = styled.div`
    display: flex;
    align-items: center;
    gap: 1px;
    padding-left: 3px;
`;

const LetterButton = styled.button`
    width: 15px;
    font-family: "Liberation Sans", sans-serif;
    font-size: 9px;
    line-height: 12px;
    color: #a2a2b4;
`;

const ToolSlot = styled.div`
    display: flex;
`;

const ToolButton = styled.button`
    position: relative;
    display: grid;
    place-items: center;
    flex: none;
    width: 15px;
    height: 15px;
`;

const More = styled.svg`
    position: absolute;
    right: 0;
    bottom: 0;
    width: 4px;
    height: 3px;
`;

const Middle = styled.main`
    display: flex;
    flex: 1;
    min-height: 0;
`;

const Sidebar = styled.aside`
    display: flex;
    flex-direction: column;
    flex: 0 0 97px;
    min-width: 0;
    padding-right: 3px;
    border-left: 2px solid #8f8fa0;
    border-right: 2px solid #8a8a96;
    background: #efeff2;
`;

const TreeMain = styled.div`
    display: flex;
    flex: 1;
    min-width: 0;
    min-height: 0;
`;

const TreeView = styled.ul`
    flex: 1;
    min-width: 0;
    margin: 0;
    padding: 6px 0 0;
    overflow: hidden;
    list-style: none;
    background: linear-gradient(#33336a, #3a3a70 40%, #a8a8c6);
`;

const TreeRow = styled.li`
    display: flex;
    align-items: center;
    height: 19px;
    white-space: nowrap;
`;

const TreeLabel = styled.span`
    flex: none;
    margin-left: 1px;
    font-size: 8px;
    line-height: 12px;
    color: #e2e2ee;
    background: ${(p) => (p.$on ? "#1a78e6" : "none")};
    outline: ${(p) => (p.$on ? "1px solid #9cc0ee" : "none")};
`;

const ScrollY = styled.div`
    display: flex;
    flex-direction: column;
    align-items: center;
    flex: 0 0 10px;
    background: #f0f0f0;

    svg {
        width: 8px;
        height: 9px;
        fill: none;
        stroke: #555;
    }
`;

const ThumbY = styled.i`
    flex: 1;
    width: 100%;
    background: #cbcbcf;
`;

const ScrollX = styled.div`
    display: flex;
    align-items: center;
    flex: 0 0 12px;

    svg {
        width: 8px;
        height: 8px;
        fill: none;
        stroke: #555;
    }

    svg:last-child {
        margin-left: auto;
        margin-right: 10px;
    }
`;

const ThumbX = styled.i`
    width: 38px;
    height: 9px;
    background: #cdcdd0;
`;

const Workspace = styled.section`
    display: flex;
    flex-direction: column;
    flex: 1;
    min-width: 0;
    padding: 0 3px 3px 3px;
    background: #f0f0f1;
`;

const Tabs = styled.div`
    display: flex;
    align-items: center;
    flex: 0 0 16px;
`;

const Tab = styled.button`
    width: 32px;
    height: 10px;
    font-size: 6px;
    line-height: 8px;
    border-right: 1px solid ${(p) => (p.$on ? "#111" : "#777")};
`;

const Stage = styled.div`
    position: relative;
    flex: 1;
    min-height: 0;
    overflow: hidden;
    border-right: 1px solid #555;
    border-bottom: 1px solid #444;
    background: #fff;
`;

const Drawing = styled.svg`
    width: 100%;
    height: 100%;
`;

const Palette = styled.section`
    position: absolute;
    left: ${(p) => p.$x}px;
    top: ${(p) => p.$y}px;
    display: flex;
    flex-direction: column;
    width: ${(p) => p.$w}px;
    height: ${(p) => p.$h}px;
    padding: ${(p) => (p.$active ? "2px 3px 3px" : "0")};
    background: ${(p) => (p.$active ? "linear-gradient(#8db0d2, #a9c8e4)" : "#fbfbfd")};
    border: ${(p) => (p.$active ? "1px solid #6d8296" : "none")};
    box-shadow: 0 1px 4px rgba(0, 0, 0, 0.4);
`;

const PaletteHead = styled.div`
    display: flex;
    align-items: center;
    justify-content: space-between;
    flex: 1;
    padding: 0 2px 0 ${(p) => (p.$active ? 0 : 4)}px;
    line-height: 8px;
    white-space: nowrap;
`;

const CloseButton = styled.button`
    width: 9px;
    height: 9px;
    background: #c75050;

    svg {
        width: 9px;
        height: 9px;
        stroke: #fff;
    }
`;

const PaletteTools = styled.div`
    display: flex;
    align-items: center;
    justify-content: space-around;
    flex: 0 0 18px;
    padding-left: 5px;
    border-bottom: 2px solid #8e8da6;
    background: linear-gradient(#d9d8ec, #c9c8e0);

    > button:last-child {
        box-shadow: ${(p) => (p.$split ? "-1px 0 0 #f4f4fb" : "none")};
    }
`;

const SideTools = styled.div`
    display: flex;
    flex-direction: column;
    flex: 0 0 20px;
    border-left: 1px solid #e8e8f2;
    border-right: 3px solid #8c8ba6;
    background: linear-gradient(90deg, #dddcef, #c6c5de);
`;

const SideGroup = styled.div`
    padding: 5px 0 5px 1px;
    border-top: 1px solid #f4f4fb;
`;

const BottomTools = styled.div`
    display: flex;
    align-items: center;
    flex: 0 0 21px;
    border-bottom: 2px solid #a09fb8;
    background: linear-gradient(#dddcec, #cbcae2);
`;

const BottomGroup = styled.div`
    display: flex;
    margin-left: ${(p) => p.$lead || 0}px;
    padding-left: 3px;
    border-left: 1px solid #eeeef8;
`;

const Logo = styled.svg`
    width: 22px;
    height: 19px;
    margin: 0 3px 0 auto;
`;

const StatusBar = styled.div`
    display: flex;
    align-items: center;
    flex: 0 0 12px;
    padding-left: 2px;
    line-height: 10px;
`;

const Command = styled.input`
    width: 158px;
    height: 9px;
    margin-left: auto;
    background: #fff;
`;

const StatusButton = styled.button`
    width: 18px;
    height: 11px;
    border: 1px solid #b9b8cc;

    svg {
        width: 10px;
        height: 8px;
        margin: 0 auto;
        fill: none;
    }
`;

const Bar = styled.footer`
    display: flex;
    flex: 0 0 21px;
    color: #f2f5f7;
    background: linear-gradient(90deg, #20363f, #20333f 60%, #1b2a44);
`;

const StartButton = styled.button`
    display: grid;
    place-items: center;
    width: 26px;
`;

const Search = styled.label`
    display: flex;
    align-items: center;
    width: 153px;
    padding-left: 6px;
    background: #f2f2f2;
`;

const SearchInput = styled.input`
    flex: 1;
    min-width: 0;
    padding-left: 6px;
    font-size: 7px;

    &::placeholder {
        color: #333;
        opacity: 1;
    }
`;

const TaskButton = styled.button`
    display: grid;
    place-items: center;
    width: 26px;
    border-bottom: 1px solid ${(p) => (p.$running ? "#7cbcec" : "transparent")};
    background: ${(p) => (p.$on ? "#4c5b66" : "none")};
`;

const Tray = styled.div`
    display: flex;
    align-items: center;
    margin-left: auto;
    padding-right: 8px;
    font-size: 7px;
`;

const Weather = styled.div`
    display: flex;
    gap: 4px;
    padding: 0 12px 0 3px;
    white-space: nowrap;
`;

const TrayIcons = styled.div`
    display: flex;
    gap: 5px;
    padding-right: 6px;

    svg {
        width: 8px;
        height: 8px;
        fill: none;
        stroke: #e6eaee;
        stroke-width: 0.9;
    }
`;

const Clock = styled.div`
    display: flex;
    flex-direction: column;
    align-items: center;
    padding-right: 9px;
    font-size: 6px;
    line-height: 9px;
    white-space: nowrap;
`;

const Watermark = styled.div`
    position: absolute;
    right: 56px;
    bottom: 48px;
    display: flex;
    flex-direction: column;
    color: rgba(130, 130, 136, 0.65);
    font-size: 7px;
    line-height: 11px;
    pointer-events: none;

    strong {
        font-size: 10px;
        font-weight: 400;
        line-height: 12px;
    }
`;

export default App;
